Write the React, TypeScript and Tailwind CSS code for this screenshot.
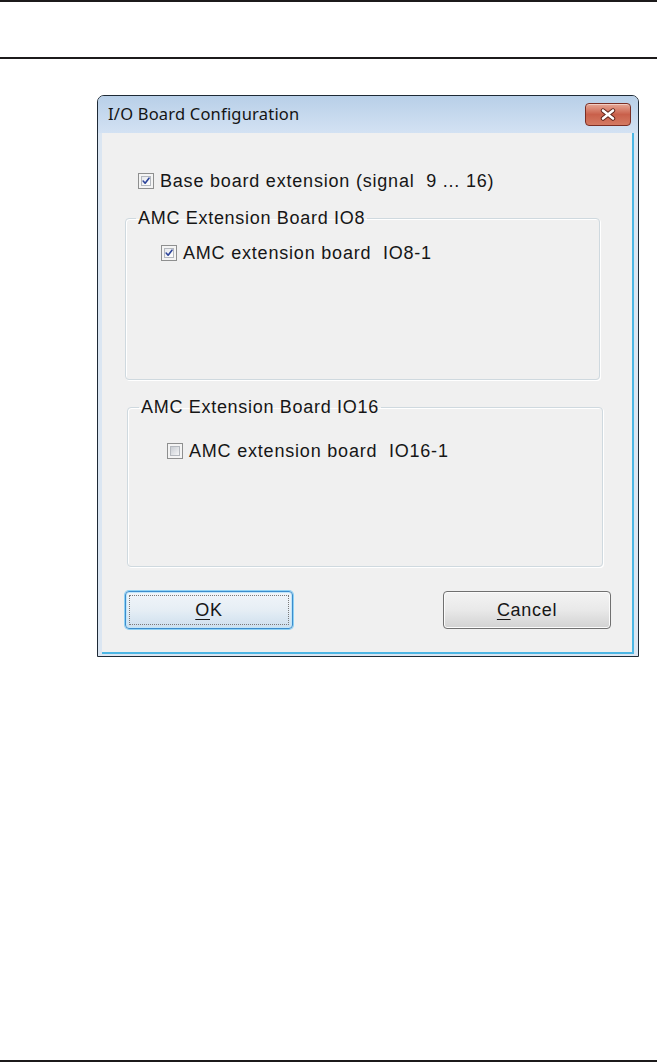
import React from "react";

const body = { fontFamily: '"Liberation Sans", Arial, sans-serif' };

function CheckBox({ checked }: { checked: boolean }) {
  return (
    <div className="w-[16px] h-[16px] border border-[#8e8f8f] bg-[#f4f4f4] p-[2px] shrink-0">
      <div
        className={
          checked
            ? "w-full h-full border border-[#b4b8be] bg-gradient-to-br from-[#e6e8ec] to-[#ffffff] flex items-center justify-center"
            : "w-full h-full border border-[#b4b8be] bg-gradient-to-br from-[#c9cdd3] to-[#f4f5f6]"
        }
      >
        {checked && (
          <svg width="10" height="10" viewBox="0 0 11 11">
            <path
              d="M1.6 5.6 L4.3 8.6 L9.6 1.6"
              fill="none"
              stroke="#2c449a"
              strokeWidth="2.2"
              strokeLinecap="round"
              strokeLinejoin="round"
            />
          </svg>
        )}
      </div>
    </div>
  );
}

function CheckRow({ checked, label }: { checked: boolean; label: string }) {
  return (
    <div className="flex items-center gap-[6px] h-[18px]">
      <CheckBox checked={checked} />
      <span className="text-[18px] leading-[20px] tracking-[0.8px] text-[#161616] whitespace-pre">
        {label}
      </span>
    </div>
  );
}

function CloseButton() {
  return (
    <div className="w-[46px] h-[23px] rounded-[4px] border border-[#7a2e24] bg-gradient-to-b from-[#e6a796] via-[#c9604b] to-[#d47a62] flex items-center justify-center shadow-[inset_0_1px_0_rgba(255,255,255,0.45)]">
      <svg width="18" height="13" viewBox="0 0 18 13">
        <path
          d="M4 2.5 L14 10.5 M14 2.5 L4 10.5"
          stroke="#5a2219"
          strokeWidth="4.4"
          strokeLinecap="round"
        />
        <path
          d="M4 2.5 L14 10.5 M14 2.5 L4 10.5"
          stroke="#ffffff"
          strokeWidth="2.6"
          strokeLinecap="round"
        />
      </svg>
    </div>
  );
}

export default function App() {
  return (
    <div className="w-[659px] h-[1062px] bg-white flex flex-col overflow-hidden" style={body}>
      <div className="h-[1.5px] w-[657px] bg-[#1c1a1b]" />
      <div className="h-[55.5px]" />
      <div className="h-[1.5px] w-[657px] bg-[#1c1a1b]" />

      {/* dialog */}
      <div className="ml-[97px] mt-[36.5px] w-[542px] h-[562px] border border-[#1e2a36] rounded-t-[7px] bg-[#dbe6f2] flex flex-col">
        <div className="h-[37px] shrink-0 rounded-t-[6px] bg-gradient-to-b from-[#b8cfe8] to-[#d3e2f3] flex items-center justify-between pl-[10px] pr-[7px]">
          <span
            className="text-[16.5px] text-[#141414] tracking-[0.2px]"
            style={{ fontFamily: '"Noto Sans", "Open Sans", sans-serif' }}
          >
            I/O Board Configuration
          </span>
          <CloseButton />
        </div>

        <div className="flex-1 mx-[4px] mb-[2px] bg-[#f0f0f0] border-r-2 border-b-2 border-[#4cb6e4] pt-[39px] flex flex-col">
          <div className="ml-[36px]">
            <CheckRow checked label="Base board extension (signal  9 ... 16)" />
          </div>

          <fieldset className="ml-[23px] mt-[18px] w-[475px] h-[172px] border border-[#cfd9df] rounded-[4px] shadow-[inset_1px_1px_0_#ffffff,1px_1px_0_#ffffff]">
            <legend className="ml-[10px] px-[2px] text-[18px] leading-[20px] tracking-[0.7px] text-[#161616]">
              AMC Extension Board IO8
            </legend>
            <div className="ml-[35px] mt-[16px]">
              <CheckRow checked label="AMC extension board  IO8-1" />
            </div>
          </fieldset>

          <fieldset className="ml-[25px] mt-[17px] w-[476px] h-[170px] border border-[#cfd9df] rounded-[4px] shadow-[inset_1px_1px_0_#ffffff,1px_1px_0_#ffffff]">
            <legend className="ml-[11px] px-[2px] text-[18px] leading-[20px] tracking-[0.7px] text-[#161616]">
              AMC Extension Board IO16
            </legend>
            <div className="ml-[39px] mt-[25px]">
              <CheckRow checked={false} label="AMC extension board  IO16-1" />
            </div>
          </fieldset>

          <div className="ml-[23px] mt-[24px] w-[486px] flex justify-between">
            <div className="w-[168px] h-[38px] rounded-[4px] border border-[#3d8ccc] shadow-[0_0_0_1px_#8fd2f4,inset_0_0_0_1px_#bfe6fa] bg-gradient-to-b from-[#f1f5f9] via-[#e6eef5] to-[#cddfee] p-[3px]">
              <div className="w-full h-full border border-dotted border-[#7a7a7a] flex items-center justify-center">
                <span className="text-[18px] tracking-[0.7px] text-[#161616]">
                  <span className="underline underline-offset-[3px] decoration-1">O</span>K
                </span>
              </div>
            </div>
            <div className="w-[168px] h-[38px] rounded-[4px] border border-[#707070] bg-gradient-to-b from-[#f3f3f3] via-[#e9e9e9] to-[#d2d2d2] shadow-[inset_0_0_0_1px_#fbfbfb] flex items-center justify-center">
              <span className="text-[18px] tracking-[0.7px] text-[#161616]">
                <span className="underline underline-offset-[3px] decoration-1">C</span>ancel
              </span>
            </div>
          </div>
        </div>
      </div>

      <div className="flex-1" />
      <div className="h-[1.5px] w-[657px] bg-[#1c1a1b] mb-[0.5px]" />
    </div>
  );
}
